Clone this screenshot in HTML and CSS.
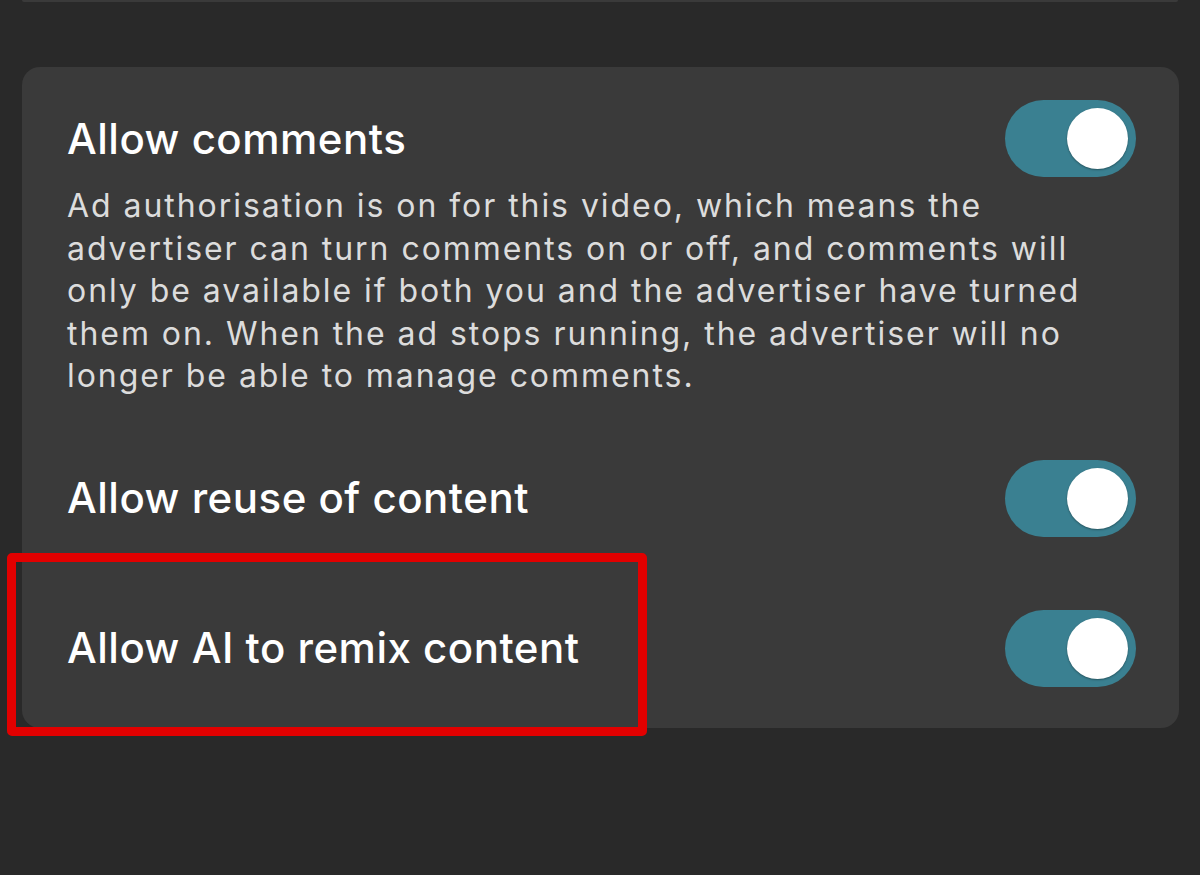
FILE: index.html
```html
<!DOCTYPE html>
<html lang="en">
<head>
<meta charset="utf-8">
<title>Settings</title>
<link rel="stylesheet" href="styles.css">
</head>
<body>
<div class="prev-card"></div>
<section class="card">
  <div class="row row-first">
    <h2 class="title">Allow comments</h2>
    <span class="toggle"><span class="knob"></span></span>
  </div>
  <p class="desc">Ad authorisation is on for this video, which means the advertiser can turn comments on or off, and comments will only be available if both you and the advertiser have turned them on. When the ad stops running, the advertiser will no longer be able to manage comments.</p>
  <div class="row row-second">
    <h2 class="title">Allow reuse of content</h2>
    <span class="toggle"><span class="knob"></span></span>
  </div>
  <div class="row row-third">
    <h2 class="title">Allow AI to remix content</h2>
    <span class="toggle"><span class="knob"></span></span>
    <span class="highlight"></span>
  </div>
</section>
</body>
</html>
```

FILE: styles.css
```css
html, body {
  margin: 0;
  padding: 0;
}
body {
  background: #292929;
  width: 1200px;
  height: 875px;
  overflow: hidden;
  font-family: "Inter", "Noto Sans", sans-serif;
  color: #ffffff;
}
.prev-card {
  height: 2px;
  margin: 0 22px 0 22px;
  background: #3a3a3a;
  border-radius: 0 0 18px 18px;
}
.card {
  margin: 65px 21px 0 22px;
  background: #3a3a3a;
  border-radius: 18px;
  padding: 33px 43px 41px 45px;
  position: relative;
}
.row {
  display: flex;
  align-items: center;
  justify-content: space-between;
  position: relative;
}
.title {
  margin: 0;
  font-size: 42px;
  font-weight: 500;
  line-height: 48px;
  letter-spacing: 0.5px;
  color: #ffffff;
}
.desc {
  margin: 8px 0 0 0;
  font-size: 32px;
  line-height: 42.5px;
  font-weight: 400;
  color: #dcdcdc;
  letter-spacing: 1.95px;
  max-width: 1035px;
}
.row-second {
  margin-top: 62px;
}
.row-third {
  margin-top: 73px;
}
.toggle {
  width: 131px;
  height: 77px;
  border-radius: 39px;
  background: #3a8091;
  display: flex;
  align-items: center;
  justify-content: flex-end;
  padding-right: 8px;
  box-sizing: border-box;
  flex-shrink: 0;
}
.knob {
  width: 61px;
  height: 61px;
  border-radius: 50%;
  background: #ffffff;
  box-shadow: 0 1px 2px rgba(0, 0, 0, 0.35);
}
.highlight {
  position: absolute;
  left: -60px;
  top: -57px;
  width: 640px;
  height: 183px;
  box-sizing: border-box;
  border: 9px solid #e20000;
  border-radius: 5px;
  pointer-events: none;
}
```
